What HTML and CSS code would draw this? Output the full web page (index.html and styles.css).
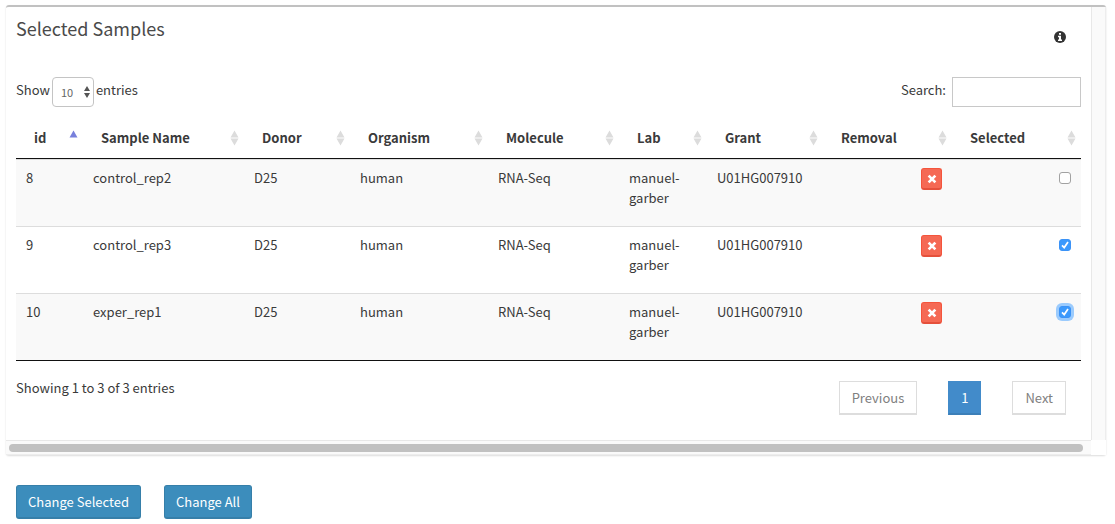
FILE: index.html
```html
<!DOCTYPE html>
<html lang="en">
<head>
<meta charset="utf-8">
<title>Selected Samples</title>
<link rel="stylesheet" href="styles.css">
</head>
<body>
<svg class="sprite" aria-hidden="true">
  <symbol id="sort" viewBox="0 0 9 16"><path d="M4.5 0.500 8.500 7.500H.5zM.5 8.500h8L4.500 15.500z"/></symbol>
  <symbol id="sort-up" viewBox="0 0 9 16"><path d="M4.500 0.500 8.500 7.500H.5z"/></symbol>
  <symbol id="times" viewBox="0 0 10 10"><path d="M2.600 2.600 7.400 7.400M7.400 2.600 2.600 7.400" fill="none" stroke="currentColor" stroke-width="2.700" stroke-linecap="square"/></symbol>
  <symbol id="info" viewBox="0 0 12 12"><circle cx="6" cy="6" r="6"/><path fill="#fff" d="M5 2h2v1.700H5zM4 4.700h3v3.800h1V10H4V8.500h1V6.200H4z"/></symbol>
</svg>
<main>
  <section class="box">
    <div class="box-body">
      <header class="box-header">
        <h3 class="box-title">Selected Samples</h3>
        <button class="info" type="button" aria-label="Information"><svg><use href="#info"/></svg></button>
      </header>
      <div class="controls">
        <label class="length">Show
          <span class="select-wrap">
            <select class="select"><option>10</option><option>25</option><option>50</option></select>
            <svg class="select-arrows" viewBox="0 0 6 12"><path d="M3 0 6 5H0zM0 7h6L3 12z"/></svg>
          </span>
          entries</label>
        <label class="filter">Search: <input class="search" type="search"></label>
      </div>
      <table class="samples">
        <colgroup>
          <col class="c-id"><col class="c-name"><col class="c-donor"><col class="c-organism"><col class="c-molecule"><col class="c-lab"><col class="c-grant"><col class="c-removal"><col class="c-selected">
        </colgroup>
        <thead>
          <tr>
            <th><button class="sort active" type="button">id<svg><use href="#sort-up"/></svg></button></th>
            <th><button class="sort" type="button">Sample Name<svg><use href="#sort"/></svg></button></th>
            <th><button class="sort" type="button">Donor<svg><use href="#sort"/></svg></button></th>
            <th><button class="sort" type="button">Organism<svg><use href="#sort"/></svg></button></th>
            <th><button class="sort" type="button">Molecule<svg><use href="#sort"/></svg></button></th>
            <th><button class="sort" type="button">Lab<svg><use href="#sort"/></svg></button></th>
            <th><button class="sort" type="button">Grant<svg><use href="#sort"/></svg></button></th>
            <th><button class="sort" type="button">Removal<svg><use href="#sort"/></svg></button></th>
            <th><button class="sort" type="button">Selected<svg><use href="#sort"/></svg></button></th>
          </tr>
        </thead>
        <tbody>
          <tr>
            <td>8</td><td>control_rep2</td><td>D25</td><td>human</td><td>RNA-Seq</td><td>manuel-garber</td><td>U01HG007910</td>
            <td><div class="end"><button class="remove" type="button" aria-label="Remove control_rep2"><svg><use href="#times"/></svg></button></div></td>
            <td><div class="end"><input class="check" type="checkbox" aria-label="Select control_rep2"></div></td>
          </tr>
          <tr>
            <td>9</td><td>control_rep3</td><td>D25</td><td>human</td><td>RNA-Seq</td><td>manuel-garber</td><td>U01HG007910</td>
            <td><div class="end"><button class="remove" type="button" aria-label="Remove control_rep3"><svg><use href="#times"/></svg></button></div></td>
            <td><div class="end"><input class="check" type="checkbox" checked aria-label="Select control_rep3"></div></td>
          </tr>
          <tr>
            <td>10</td><td>exper_rep1</td><td>D25</td><td>human</td><td>RNA-Seq</td><td>manuel-garber</td><td>U01HG007910</td>
            <td><div class="end"><button class="remove" type="button" aria-label="Remove exper_rep1"><svg><use href="#times"/></svg></button></div></td>
            <td><div class="end"><input class="check focused" type="checkbox" checked aria-label="Select exper_rep1"></div></td>
          </tr>
        </tbody>
      </table>
      <footer class="table-footer">
        <div>Showing 1 to 3 of 3 entries</div>
        <nav class="pages">
          <button class="page" type="button">Previous</button>
          <button class="page current" type="button">1</button>
          <button class="page" type="button">Next</button>
        </nav>
      </footer>
    </div>
    <div class="track-v"></div>
    <div class="track-h"><div class="thumb"></div></div>
    <div class="corner"></div>
  </section>
  <div class="actions">
    <button class="btn" type="button">Change Selected</button>
    <button class="btn" type="button">Change All</button>
  </div>
</main>
</body>
</html>
```
FILE: styles.css
```css
* { box-sizing: border-box; }

body {
  margin: 0;
  background: #fff;
  color: #3a3a3a;
  font: 13px/20px "Noto Sans CJK SC", "Source Sans Pro", sans-serif;
}

button, input, select { font: inherit; color: inherit; margin: 0; }
button { cursor: pointer; }
svg { display: block; fill: currentColor; }
.sprite { position: absolute; width: 0; height: 0; }

main { padding: 5px 9px 5px 6px; }

.box {
  display: grid;
  grid-template-columns: 1fr 15px;
  grid-template-rows: auto 15px;
  border-top: 2px solid #c1c1c1;
  border-radius: 3px;
  box-shadow: 0 1px 2px rgba(0, 0, 0, 0.14);
}

.box-body { padding: 10px 10px 25px; min-width: 0; }

.box-header {
  display: flex;
  justify-content: space-between;
  padding-right: 15px;
  height: 60px;
}
.box-title { margin: 0; font-size: 18px; line-height: 22px; font-weight: 400; color: #4a4a4a; }
.info { margin-top: 14px; padding: 0; border: 0; background: none; height: 12px; color: #333; }
.info svg { width: 12px; height: 12px; }

.controls { display: flex; justify-content: space-between; align-items: flex-start; height: 41px; }
.length { display: flex; gap: 2px; line-height: 26px; }
.filter { display: flex; gap: 6px; line-height: 26px; }
.select-wrap { position: relative; }
.select {
  appearance: none;
  display: block;
  width: 42px;
  height: 30px;
  padding: 0 8px;
  border: 1px solid #c4c4c4;
  border-radius: 4px;
  background: #fff;
  color: #666;
  font-size: 11px;
}
.select-arrows { position: absolute; right: 4px; top: 9px; width: 6px; height: 12px; color: #555; pointer-events: none; }
.search { appearance: none; width: 129px; height: 30px; padding: 5px 10px; border: 1px solid #c8c8c8; background: #fff; border-radius: 0; }

.samples {
  width: 100%;
  table-layout: fixed;
  border-collapse: separate;
  border-spacing: 0;
  border-bottom: 1px solid #111;
}
.c-id { width: 67px; }
.c-name { width: 161px; }
.c-donor { width: 106px; }
.c-organism { width: 138px; }
.c-molecule { width: 131px; }
.c-lab { width: 88px; }
.c-grant { width: 116px; }
.c-removal { width: 129px; }
.c-selected { width: 129px; }

.samples th { padding: 0; border-bottom: 1px solid #111; text-align: left; }
.sort {
  display: flex;
  justify-content: space-between;
  align-items: center;
  width: 100%;
  height: 40px;
  padding: 0 5px 0 18px;
  border: 0;
  background: none;
  font-weight: 700;
}
.sort svg { width: 9px; height: 16px; color: #dcdcdc; }
.sort.active svg { color: #7880dc; }

.samples td { padding: 8px 10px 18px; border-top: 1px solid #ddd; vertical-align: top; }
.samples tbody tr:nth-child(odd) { background: #f9f9f9; }
.end { display: flex; justify-content: flex-end; }
.remove {
  display: grid;
  place-items: center;
  width: 21px;
  height: 22px;
  padding: 0;
  border: 1px solid #f4543c;
  border-bottom: 2px solid #e5503b;
  border-radius: 3px;
  background: #f56954;
  color: #fff;
}
.remove svg { width: 10px; height: 10px; }

.check {
  appearance: none;
  width: 12px;
  height: 12px;
  margin-top: 4px;
  border: 1px solid #a2a2a2;
  border-radius: 3px;
  background: #fff;
}
.check:checked {
  border-color: #3b93f7;
  background: #3b99fc url("data:image/svg+xml,%3Csvg xmlns='http://www.w3.org/2000/svg' viewBox='0 0 10 10'%3E%3Cpath d='M2 5.300 4.200 7.600 8 2' fill='none' stroke='white' stroke-width='1.700'/%3E%3C/svg%3E") center / 10px 10px no-repeat;
}
.check.focused { box-shadow: 0 0 0 3px #9bcbfd; }

.table-footer { display: flex; justify-content: space-between; align-items: flex-start; padding: 17px 15px 0 0; }
.pages { display: flex; gap: 31px; padding-top: 3px; }
.page { height: 34px; padding: 0 12px; border: 1px solid #ddd; border-bottom-width: 2px; background: #fff; color: #808080; }
.page.current { border-color: #428bca; border-bottom-color: #3c7fb8; background: #428bca; color: #fff; }

.track-v { background: #fafafa; border-left: 1px solid #e8e8e8; border-right: 1px solid #ededed; }
.track-h { padding: 3px 8px 2px 3px; background: #fafafa; border-top: 1px solid #e8e8e8; border-bottom: 1px solid #ededed; }
.thumb { height: 8px; border-radius: 4px; background: #c1c1c1; }
.corner { background: #fff; }

.actions { display: flex; gap: 23px; padding: 30px 10px 0; }
.btn {
  height: 34px;
  padding: 0 11px;
  border: 1px solid #367fa9;
  border-bottom-width: 2px;
  border-radius: 3px;
  background: #3c8dbc;
  color: #fff;
}
```
